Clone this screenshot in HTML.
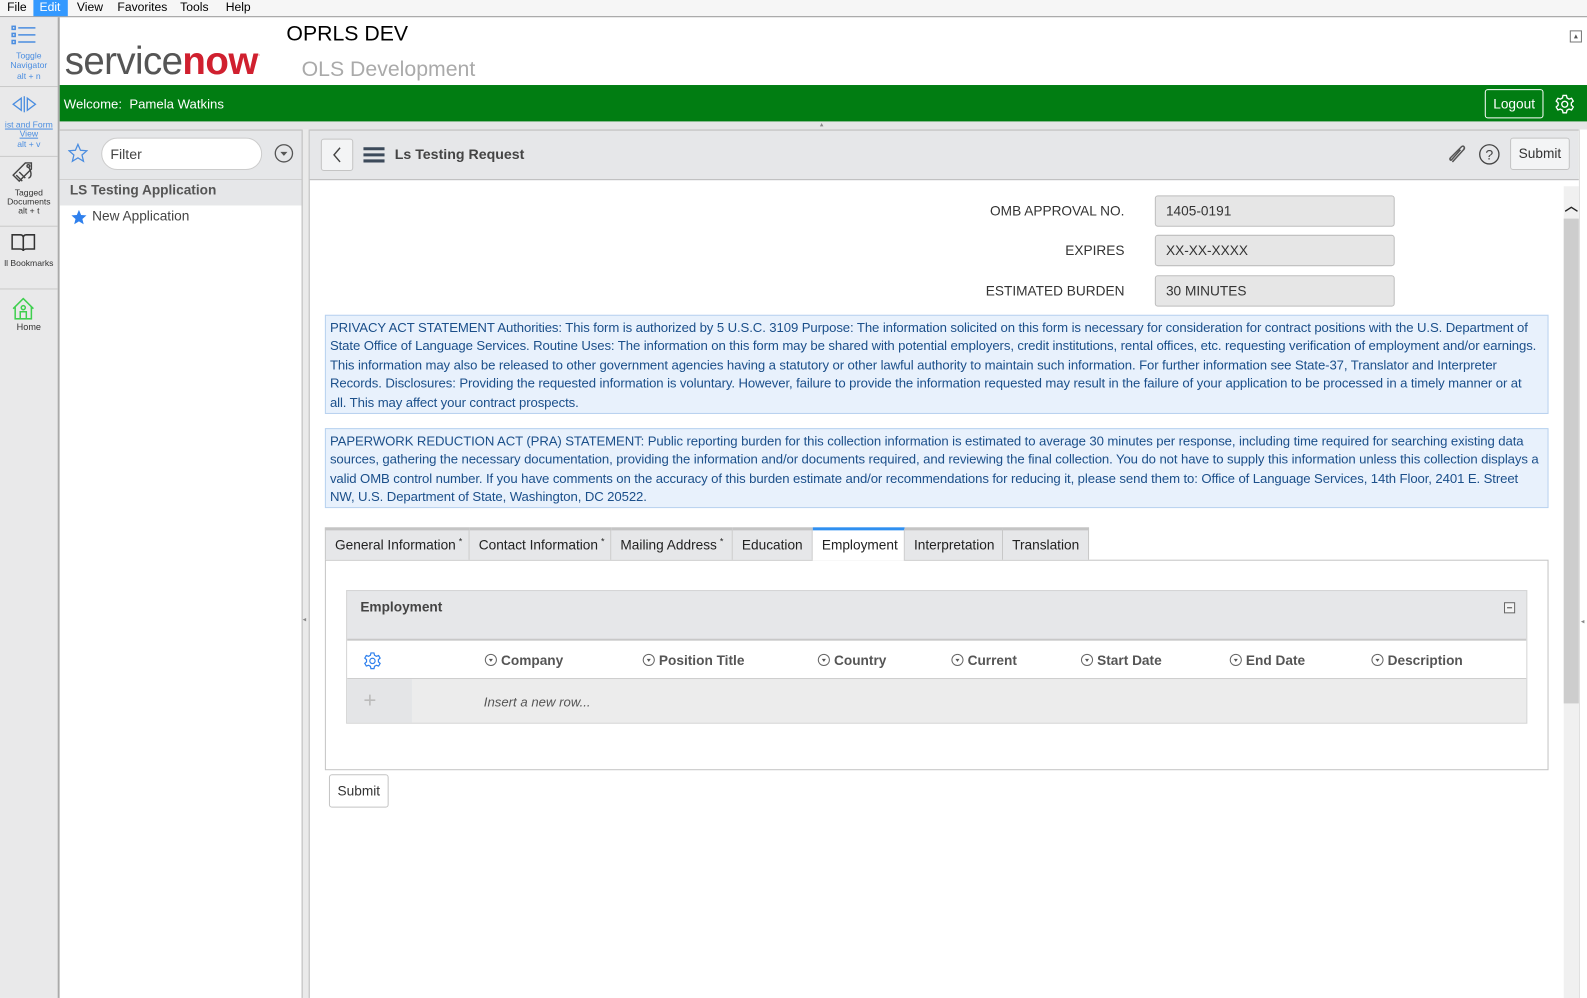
<!DOCTYPE html>
<html><head><meta charset="utf-8">
<style>
*{box-sizing:border-box;margin:0;padding:0}
body{width:1587px;height:986px;overflow:hidden;font-family:"Liberation Sans",Arial,sans-serif;background:#fff;position:relative;color:#333}
#w{position:absolute;left:0;top:0;width:1568px;height:975px;transform:scale(1.01212);transform-origin:0 0}
.abs{position:absolute}
.menubar{left:0;top:0;width:1568px;height:17px;background:#f6f6f6;border-bottom:1px solid #999;font-size:12px;color:#000}
.menubar span{position:absolute;top:0;height:16px;line-height:15px;padding:0 6px}
.rail{left:0;top:17px;width:59px;height:969px;background:#e9e9ea;border-right:2px solid #aaa}
.rail .it{position:absolute;left:0;width:57px;text-align:center;font-size:8.5px;line-height:9px;color:#333}
.rail .sep{position:absolute;left:0;width:57px;height:1px;background:#c9c9c9}
.green{left:59px;top:84px;width:1509px;height:36px;background:#017d12;color:#fff;font-size:13px}
.gap{left:59px;top:120px;width:1509px;height:8px;background:#e6e6e6}
.nav{left:59px;top:128px;width:240px;height:858px;background:#fff;border-right:1px solid #ccc}
.split{left:298px;top:128px;width:8px;height:858px;background:#eaeaea;border-left:1px solid #bbb;border-right:1px solid #bbb}
.fh{left:306px;top:128px;width:1254px;height:50px;background:#e6e7e9;border-bottom:1px solid #bbb;border-top:1px solid #bbb}
.lbl{font-size:13.5px;color:#333;text-align:right;width:300px;left:811px}
.inp{left:1141px;width:237px;height:31px;background:#e6e6e6;border:1px solid #bdbdbd;border-radius:3px;font-size:13.5px;line-height:29px;padding-left:10px;color:#333}
.info{left:321px;width:1209px;background:#e8f1fc;border:1px solid #b8d2ef;color:#1b4f8a;font-size:13px;line-height:18.4px;padding:3px 4px;white-space:nowrap;letter-spacing:-0.1px}
.tab{position:absolute;top:0;height:32px;background:#e6e7e9;border-right:1px solid #c8c8c8;font-size:13.5px;line-height:29px;padding-left:9px;color:#222;border-top:3px solid #c4c4c4;white-space:nowrap}
.st{font-size:9px;position:relative;top:-5px;margin-left:3px}
.col{position:absolute;top:0;font-size:13.5px;font-weight:bold;color:#555;line-height:39px}
.col i{display:inline-block;width:12px;height:12px;border:1px solid #666;border-radius:50%;vertical-align:-1px;margin-right:4px;position:relative}
.col i:after{content:"";position:absolute;left:3px;top:4px;border-left:2.5px solid transparent;border-right:2.5px solid transparent;border-top:3px solid #555}
</style></head><body><div id="w">

<div class="abs menubar">
<span style="left:1px">File</span>
<span style="left:33px;width:34px;background:#3399ff;color:#fff">Edit</span>
<span style="left:70px">View</span>
<span style="left:110px">Favorites</span>
<span style="left:172px">Tools</span>
<span style="left:217px">Help</span>
</div>

<div class="abs rail">
 <svg class="abs" style="left:11px;top:8px" width="26" height="20" viewBox="0 0 26 20"><g fill="none" stroke="#4a8de0" stroke-width="1.5"><rect x="1" y="1" width="3" height="3"/><rect x="1" y="8" width="3" height="3"/><rect x="1" y="15" width="3" height="3"/><path d="M7 2.5h17M7 9.5h17M7 16.5h17"/></g></svg>
 <div class="it" style="top:34px;color:#4a8de0">Toggle<br>Navigator<br><span style="line-height:12px">alt + n</span></div>
 <div class="sep" style="top:68px"></div>
 <svg class="abs" style="left:11px;top:78px" width="26" height="16" viewBox="0 0 26 16"><g fill="none" stroke="#4a8de0" stroke-width="1.3"><path d="M10 2L2 8l8 6z"/><path d="M16 2l8 6-8 6z"/><path d="M13 0v16"/></g></svg>
 <div class="it" style="top:102px;color:#4a8de0;text-decoration:underline">ist and Form<br>View</div>
 <div class="it" style="top:121px;color:#4a8de0">alt + v</div>
 <div class="sep" style="top:137px"></div>
 <svg class="abs" style="left:11px;top:142px" width="24" height="24" viewBox="0 0 24 24"><g fill="none" stroke="#444" stroke-width="1.4"><path d="M2 14L14 2h6v6L8 20z"/><path d="M5 14l6 6M8 11l6 6"/><circle cx="17" cy="5" r="1.3"/><path d="M17 6c3 4 4 10 0 11"/></g></svg>
 <div class="it" style="top:169px">Tagged<br>Documents<br>alt + t</div>
 <div class="sep" style="top:206px"></div>
 <svg class="abs" style="left:10px;top:213px" width="26" height="20" viewBox="0 0 26 20"><g fill="none" stroke="#333" stroke-width="1.5"><path d="M2 2h8c2 0 3 1 3 3v13c0-1-1-2-3-2H2z"/><path d="M24 2h-8c-2 0-3 1-3 3v13c0-1 1-2 3-2h8z"/></g></svg>
 <div class="it" style="top:239px">ll Bookmarks</div>
 <div class="sep" style="top:268px"></div>
 <svg class="abs" style="left:12px;top:277px" width="22" height="22" viewBox="0 0 22 22"><g fill="none" stroke="#3fcf4f" stroke-width="1.5"><path d="M1 11L11 1l10 10M3 9v12h16V9"/><circle cx="11" cy="10" r="2"/><path d="M8 21v-7h6v7"/></g></svg>
 <div class="it" style="top:302px;font-size:9px">Home</div>
</div>

<!-- header -->
<div class="abs" style="left:64px;top:32px;font-size:38px;letter-spacing:-0.6px;color:#555;line-height:40px">service<span style="color:#d0202f;font-weight:bold;letter-spacing:-0.5px">now</span><span style="font-size:9px;color:#d0202f;vertical-align:18px">.</span></div>
<div class="abs" style="left:283px;top:22px;font-size:21px;color:#000">OPRLS DEV</div>
<div class="abs" style="left:298px;top:57px;font-size:21px;color:#aaa">OLS Development</div>
<div class="abs" style="left:1551px;top:30px;width:12px;height:12px;border:1px solid #777;font-size:8px;text-align:center;line-height:10px;color:#555">▴</div>

<div class="abs green">
 <div class="abs" style="left:4px;top:11px">Welcome:&nbsp; Pamela Watkins</div>
 <div class="abs" style="left:1408px;top:4px;width:58px;height:29px;border:1px solid #fff;border-radius:3px;text-align:center;line-height:27px;font-size:13.5px">Logout</div>
 <svg class="abs" style="left:1477px;top:9px" width="20" height="20" viewBox="0 0 24 24"><g fill="none" stroke="#fff" stroke-width="1.6"><circle cx="12" cy="12" r="3.5"/><path d="M10 1.5h4l.7 3 2.4 1.4 3-1 2 3.4-2.3 2.1v2.8l2.3 2.1-2 3.4-3-1-2.4 1.4-.7 3h-4l-.7-3-2.4-1.4-3 1-2-3.4 2.3-2.1v-2.8L1.9 8.3l2-3.4 3 1L9.3 4.5z"/></g></svg>
</div>
<div class="abs gap"></div>
<div class="abs" style="left:810px;top:119px;font-size:7px;color:#888">▴</div>

<!-- nav -->
<div class="abs nav">
 <div class="abs" style="left:0;top:0;width:239px;height:50px;background:#e6e7e9;border-bottom:1px solid #ccc;border-top:1px solid #bbb"></div>
 <svg class="abs" style="left:8px;top:13px" width="20" height="20" viewBox="0 0 24 24"><path d="M12 2l3 7 7.5.6-5.7 5 1.8 7.4L12 18l-6.6 4 1.8-7.4L1.5 9.6 9 9z" fill="none" stroke="#4a8de0" stroke-width="1.5"/></svg>
 <div class="abs" style="left:41px;top:8px;width:159px;height:32px;background:#fff;border:1px solid #ccc;border-radius:16px;font-size:14px;line-height:30px;padding-left:8px;color:#444">Filter</div>
 <svg class="abs" style="left:212px;top:14px" width="19" height="19" viewBox="0 0 19 19"><circle cx="9.5" cy="9.5" r="8.5" fill="none" stroke="#555" stroke-width="1.3"/><path d="M6 8h7l-3.5 4z" fill="#555"/></svg>
 <div class="abs" style="left:0;top:50px;width:239px;height:25px;background:#e6e7e9;font-size:13.5px;font-weight:bold;color:#555;line-height:20px;padding-left:10px">LS Testing Application</div>
 <svg class="abs" style="left:10px;top:78px" width="18" height="17" viewBox="0 0 24 24"><path d="M12 2l3 7 7.5.6-5.7 5 1.8 7.4L12 18l-6.6 4 1.8-7.4L1.5 9.6 9 9z" fill="#2f80ed"/></svg>
 <div class="abs" style="left:32px;top:78px;font-size:13.5px;color:#444">New Application</div>
</div>
<div class="abs split"><div class="abs" style="left:0;top:480px;font-size:7px;color:#888">◂</div></div>

<!-- form header -->
<div class="abs fh">
 <div class="abs" style="left:11px;top:8px;width:32px;height:32px;border:1px solid #c4c4c4;border-radius:3px;background:#f3f4f5"></div>
 <svg class="abs" style="left:21px;top:16px" width="12" height="16" viewBox="0 0 12 16"><path d="M9 1L3 8l6 7" fill="none" stroke="#444" stroke-width="1.4"/></svg>
 <svg class="abs" style="left:53px;top:16px" width="21" height="16" viewBox="0 0 21 16"><path d="M0 2h21M0 8h21M0 14h21" stroke="#3c4a5a" stroke-width="3"/></svg>
 <div class="abs" style="left:84px;top:15px;font-size:14px;font-weight:bold;color:#444">Ls Testing Request</div>
 <svg class="abs" style="left:1123px;top:12px" width="22" height="22" viewBox="0 0 22 22"><path d="M6 19L17 7c2-2 0-5-2-3L4 15c-1 1 0 3 1 2l9-10" fill="none" stroke="#555" stroke-width="1.5"/></svg>
 <svg class="abs" style="left:1155px;top:13px" width="21" height="21" viewBox="0 0 21 21"><circle cx="10.5" cy="10.5" r="9.5" fill="none" stroke="#444" stroke-width="1.3"/><text x="10.5" y="15.5" font-family="Liberation Sans" font-size="14" text-anchor="middle" fill="#444">?</text></svg>
 <div class="abs" style="left:1186px;top:7px;width:59px;height:32px;border:1px solid #c4c4c4;border-radius:3px;background:#f3f4f5;font-size:13.5px;text-align:center;line-height:30px;color:#333">Submit</div>
</div>

<!-- scrollbar -->
<div class="abs" style="left:1545px;top:184px;width:15px;height:802px;background:#f0f0f0"></div>
<div class="abs" style="left:1545px;top:216px;width:15px;height:479px;background:#cdcdcd"></div>
<div class="abs" style="left:1546px;top:193px;font-size:13px;color:#222;font-weight:bold">︿</div>
<div class="abs" style="left:1560px;top:128px;width:27px;height:858px;background:#fff;border-left:1px solid #ddd"></div>
<div class="abs" style="left:1562px;top:610px;font-size:7px;color:#888">◂</div>

<!-- fields -->
<div class="abs lbl" style="top:201px">OMB APPROVAL NO.</div>
<div class="abs inp" style="top:193px">1405-0191</div>
<div class="abs lbl" style="top:240px">EXPIRES</div>
<div class="abs inp" style="top:232px">XX-XX-XXXX</div>
<div class="abs lbl" style="top:280px">ESTIMATED BURDEN</div>
<div class="abs inp" style="top:272px">30 MINUTES</div>

<div class="abs info" style="top:311px;height:98px">PRIVACY ACT STATEMENT Authorities: This form is authorized by 5 U.S.C. 3109 Purpose: The information solicited on this form is necessary for consideration for contract positions with the U.S. Department of<br>State Office of Language Services. Routine Uses: The information on this form may be shared with potential employers, credit institutions, rental offices, etc. requesting verification of employment and/or earnings.<br>This information may also be released to other government agencies having a statutory or other lawful authority to maintain such information. For further information see State-37, Translator and Interpreter<br>Records. Disclosures: Providing the requested information is voluntary. However, failure to provide the information requested may result in the failure of your application to be processed in a timely manner or at<br>all. This may affect your contract prospects.</div>

<div class="abs info" style="top:423px;height:79px">PAPERWORK REDUCTION ACT (PRA) STATEMENT: Public reporting burden for this collection information is estimated to average 30 minutes per response, including time required for searching existing data<br>sources, gathering the necessary documentation, providing the information and/or documents required, and reviewing the final collection. You do not have to supply this information unless this collection displays a<br>valid OMB control number. If you have comments on the accuracy of this burden estimate and/or recommendations for reducing it, please send them to: Office of Language Services, 14th Floor, 2401 E. Street<br>NW, U.S. Department of State, Washington, DC 20522.</div>

<!-- tabs -->
<div class="abs" style="left:321px;top:553px;width:1209px;height:208px;border:1px solid #c4c4c4"></div>
<div class="abs" style="left:321px;top:521px;width:755px;height:33px">
 <div class="tab" style="left:0;width:143px;border-left:1px solid #c8c8c8">General Information<span class="st">*</span></div>
 <div class="tab" style="left:143px;width:140px">Contact Information<span class="st">*</span></div>
 <div class="tab" style="left:283px;width:120px">Mailing Address<span class="st">*</span></div>
 <div class="tab" style="left:403px;width:79px">Education</div>
 <div class="tab" style="left:482px;width:91px;background:#fff;border-top-color:#2f8ff0;height:33px">Employment</div>
 <div class="tab" style="left:573px;width:97px">Interpretation</div>
 <div class="tab" style="left:670px;width:85px">Translation</div>
</div>

<!-- employment section -->
<div class="abs" style="left:342px;top:583px;width:1167px;height:132px;border:1px solid #d4d4d4;background:#e6e7e9">
 <div class="abs" style="left:13px;top:8px;font-size:13.5px;font-weight:bold;color:#444">Employment</div>
 <div class="abs" style="left:1143px;top:11px;width:11px;height:11px;border:1px solid #666;background:#f4f4f4"><div style="margin:4px 2px 0;height:1px;background:#444"></div></div>
 <div class="abs" style="left:0;top:47px;width:1165px;height:40px;background:#fff;border-top:2px solid #c8c8c8;border-bottom:1px solid #c8c8c8">
  <svg class="abs" style="left:16px;top:11px" width="18" height="18" viewBox="0 0 24 24"><g fill="none" stroke="#2f80ed" stroke-width="1.6"><circle cx="12" cy="12" r="3.5"/><path d="M10 1.5h4l.7 3 2.4 1.4 3-1 2 3.4-2.3 2.1v2.8l2.3 2.1-2 3.4-3-1-2.4 1.4-.7 3h-4l-.7-3-2.4-1.4-3 1-2-3.4 2.3-2.1v-2.8L1.9 8.3l2-3.4 3 1L9.3 4.5z"/></g></svg>
  <div class="col" style="left:136px"><i></i>Company</div>
  <div class="col" style="left:292px"><i></i>Position Title</div>
  <div class="col" style="left:465px"><i></i>Country</div>
  <div class="col" style="left:597px"><i></i>Current</div>
  <div class="col" style="left:725px"><i></i>Start Date</div>
  <div class="col" style="left:872px"><i></i>End Date</div>
  <div class="col" style="left:1012px"><i></i>Description</div>
 </div>
 <div class="abs" style="left:0;top:87px;width:1165px;height:43px;background:#ececec">
  <div class="abs" style="left:0;top:0;width:64px;height:43px;background:#e4e5e7"></div>
  <div class="abs" style="left:16px;top:8px;font-size:22px;color:#bbb">+</div>
  <div class="abs" style="left:135px;top:15px;font-size:13px;font-style:italic;color:#555">Insert a new row...</div>
 </div>
</div>

<div class="abs" style="left:325px;top:765px;width:59px;height:33px;border:1px solid #c4c4c4;border-radius:3px;background:#fff;font-size:13.5px;text-align:center;line-height:31px;color:#333">Submit</div>

</div></body></html>
